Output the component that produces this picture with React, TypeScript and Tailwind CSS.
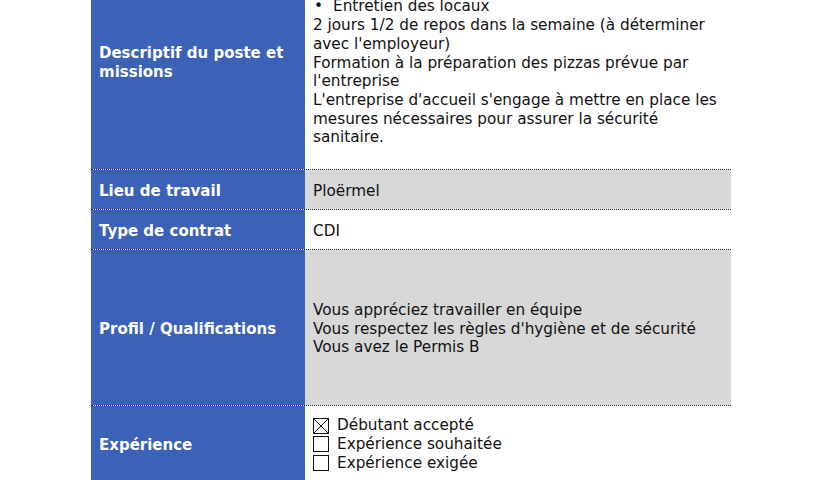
import React from "react";

const font = { fontFamily: '"DejaVu Sans", Verdana, sans-serif' };

function Box({ checked }: { checked?: boolean }) {
  return (
    <svg width="16" height="16" viewBox="0 0 16 16" className="shrink-0">
      <rect x="0.5" y="0.5" width="15" height="15" fill="white" stroke="#111" strokeWidth="1" />
      {checked && (
        <g stroke="#111" strokeWidth="1">
          <line x1="1" y1="1" x2="15" y2="15" />
          <line x1="15" y1="1" x2="1" y2="15" />
        </g>
      )}
    </svg>
  );
}

function Row({
  label,
  children,
  h,
  gray,
  rightClass = "pt-[3px]",
}: {
  label: string;
  children: React.ReactNode;
  h: string;
  gray?: boolean;
  rightClass?: string;
}) {
  return (
    <div className={`flex border-b border-dotted border-[#222] ${h}`}>
      <div className="w-[214px] shrink-0 bg-[#3b62b6] px-2 pt-[3px] flex items-center text-white font-bold text-[15px] leading-[18.7px]">
        {label}
      </div>
      <div
        className={`flex-1 px-2 text-[15.25px] leading-[18.7px] text-[#111] ${gray ? "bg-[#d8d8d8]" : "bg-white"} ${rightClass}`}
      >
        {children}
      </div>
    </div>
  );
}

function Bullet({ children }: { children: React.ReactNode }) {
  return (
    <div className="flex">
      <span className="w-[20px] pl-[1px]">•</span>
      <span>{children}</span>
    </div>
  );
}

export default function App() {
  return (
    <div className="w-[826px] h-[480px] overflow-hidden bg-white" style={font}>
      <div className="ml-[91px] w-[640px] -mt-[47px]">
        <Row label="Descriptif du poste et missions" h="h-[217px]" rightClass="pt-[7px]">
          <Bullet>Préparation des pizzas</Bullet>
          <Bullet>Service au comptoir</Bullet>
          <Bullet>Entretien des locaux</Bullet>
          <div>2 jours 1/2 de repos dans la semaine (à déterminer avec l'employeur)</div>
          <div>Formation à la préparation des pizzas prévue par l'entreprise</div>
          <div>L'entreprise d'accueil s'engage à mettre en place les mesures nécessaires pour assurer la sécurité sanitaire.</div>
        </Row>
        <Row label="Lieu de travail" h="h-[40px]" gray rightClass="pt-[3px] flex items-center">
          Ploërmel
        </Row>
        <Row label="Type de contrat" h="h-[40px]" rightClass="pt-[3px] flex items-center">
          CDI
        </Row>
        <Row label="Profil / Qualifications" h="h-[156px]" gray rightClass="pt-[3px] flex flex-col justify-center">
          <div>Vous appréciez travailler en équipe</div>
          <div>Vous respectez les règles d'hygiène et de sécurité</div>
          <div>Vous avez le Permis B</div>
        </Row>
        <Row label="Expérience" h="h-[77px]" rightClass="pt-[1px] flex flex-col justify-center">
          <div className="flex items-center gap-[8px]"><Box checked /><span>Débutant accepté</span></div>
          <div className="flex items-center gap-[8px]"><Box /><span>Expérience souhaitée</span></div>
          <div className="flex items-center gap-[8px]"><Box /><span>Expérience exigée</span></div>
        </Row>
      </div>
    </div>
  );
}
